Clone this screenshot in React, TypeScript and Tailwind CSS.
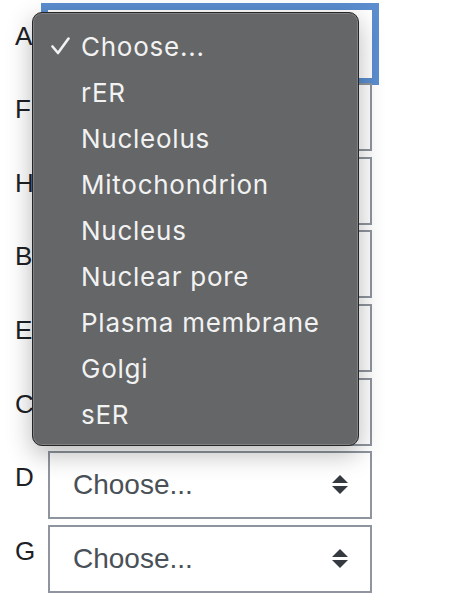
import React from "react";

const labels = ["A", "F", "H", "B", "E", "C", "D", "G"];
const items = [
  "Choose...",
  "rER",
  "Nucleolus",
  "Mitochondrion",
  "Nucleus",
  "Nuclear pore",
  "Plasma membrane",
  "Golgi",
  "sER",
];

function Arrows() {
  return (
    <svg width="16" height="20" viewBox="0 0 16 20" className="shrink-0">
      <polygon points="8,0 16,8 0,8" fill="#343a40" />
      <polygon points="0,11 16,11 8,19" fill="#343a40" />
    </svg>
  );
}

export default function App() {
  return (
    <div className="relative w-[454px] h-[614px] overflow-hidden bg-white [font-family:'Liberation_Sans',Arial,sans-serif]">
      <div className="flex flex-col gap-[5.6px] pt-[9.7px]">
        {labels.map((l, i) => (
          <div key={l} className="flex">
            <div className="w-[48px] pl-[15px] mt-[12px] text-[26px] leading-[28px] text-[#1d2125]">
              {l}
            </div>
            <div
              className={
                i === 0
                  ? "w-[324px] h-[68px] border-2 border-white shadow-[0_0_0_7px_#5b8dcf] flex items-center justify-between pl-[23px] pr-[22px]"
                  : "w-[324px] h-[68px] border-2 border-[#8f959e] flex items-center justify-between pl-[23px] pr-[22px]"
              }
            >
              <span className="text-[28px] text-[#495057]">Choose...</span>
              <Arrows />
            </div>
          </div>
        ))}
      </div>

      <div className="absolute left-[32px] top-[12px] w-[327px] h-[434px] rounded-[10px] bg-[#646668] border border-[#262626] shadow-[0_8px_26px_rgba(0,0,0,0.28),inset_0_0_0_1px_rgba(255,255,255,0.18)] pt-[10px] [font-family:Inter,'Noto_Sans',sans-serif]">
        {items.map((it, i) => (
          <div key={it} className="relative h-[46px] flex items-center pl-[48px] text-[26px] tracking-[0.75px] font-normal text-[#f2f2f2]">
            {i === 0 && (
              <svg
                width="19"
                height="18"
                viewBox="0 0 19 18"
                className="absolute left-[18px] top-[14px]"
              >
                <path
                  d="M1.5 9.5 L7 16 L17.5 1.5"
                  fill="none"
                  stroke="#f2f2f2"
                  strokeWidth="2.6"
                  strokeLinecap="round"
                  strokeLinejoin="round"
                />
              </svg>
            )}
            {it}
          </div>
        ))}
      </div>
    </div>
  );
}
